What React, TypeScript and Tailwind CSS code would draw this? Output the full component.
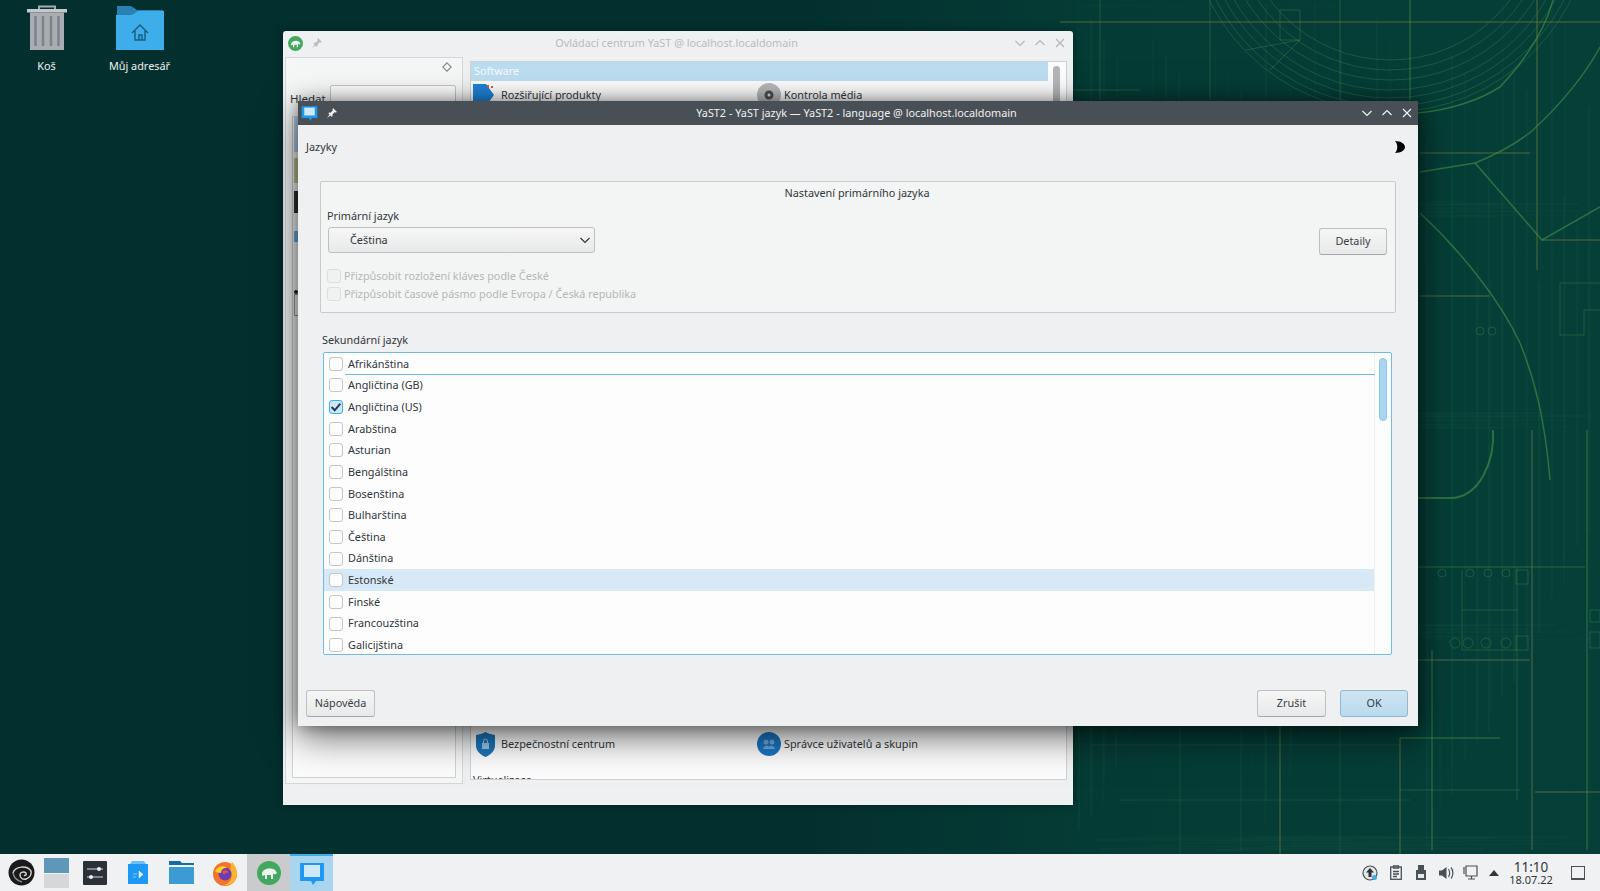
import React from "react";

const languages = ["Afrikánština","Angličtina (GB)","Angličtina (US)","Arabština","Asturian","Bengálština","Bosenština","Bulharština","Čeština","Dánština","Estonské","Finské","Francouzština","Galicijština"];

function Wallpaper() {
  const vs: number[] = [];
  for (let i = 0; i < 70; i++) vs.push(1078 + ((i * 137) % 523));
  const hs: number[] = [];
  for (let i = 0; i < 64; i++) hs.push(6 + ((i * 211) % 845));
  return (
    <svg className="absolute inset-0" width="1600" height="854" fill="none">
      {vs.map((x, i) => <path key={i} d={`M${x} ${(i * 53) % 300}V${520 + ((i * 71) % 334)}`} stroke="#3f8a5a" strokeOpacity={0.06 + (i % 4) * 0.035} />)}
      {hs.map((y, i) => <path key={i} d={`M${1075 + ((i * 97) % 250)} ${y}H${1340 + ((i * 83) % 260)}`} stroke="#3f8a5a" strokeOpacity={0.06 + (i % 3) * 0.04} />)}
      {[150, 160, 170, 180, 188, 196, 202].map((r) => <circle key={r} cx="1390" cy="-90" r={r} stroke="#4c9a50" strokeOpacity="0.3" />)}
      <g stroke="#4d9a48" strokeWidth="1.5" strokeOpacity="0.55">
        <path d="M1420 213C1460 250 1500 300 1520 343C1535 380 1545 420 1550 480" />
        <path d="M1600 47C1585 75 1565 100 1533 130C1515 145 1495 155 1475 163L1420 172" />
        <path d="M1475 163L1542 240L1600 207" />
        <path d="M1553 0C1545 30 1525 60 1500 87C1480 100 1450 110 1418 113" />
        <path d="M1493 430C1495 460 1480 498 1450 498H1418" strokeWidth="2" />
      </g>
      <g stroke="#6a7a3f" strokeWidth="2" strokeOpacity="0.38">
        <path d="M1060 22H1600" />
        <path d="M1420 153H1530" />
        <path d="M1420 296H1490" />
        <path d="M1542 240H1600" />
        <path d="M1537 0V270" />
        <path d="M1535 792H1600" />
        <path d="M1532 430V850" />
        <path d="M1418 660H1530" />
        <path d="M1280 726V854" />
        <path d="M1400 738V854" />
      </g>
      <g stroke="#4d9a48" strokeOpacity="0.32">
        <path d="M1410 0V100" strokeWidth="2" />
        <path d="M1418 567H1585" strokeWidth="1.5" />
        <path d="M1400 738H1500" strokeWidth="2" />
        <path d="M1400 790H1520" />
        <path d="M1587 430V850" strokeWidth="2" />
        <path d="M1432 650V850" strokeWidth="2" />
        <path d="M1517 567V800" />
        <path d="M1560 283H1600M1560 283V335H1584V310H1600" />
        <path d="M1462 610H1518M1462 570V650H1518" />
        <path d="M1280 10H1300V40H1280ZM1246 50L1300 40L1270 70" />
        <path d="M1072 90H1140M1100 0V100M1210 0V100M1340 0V100" />
        <path d="M1090 745H1400M1120 800H1410M1180 726V854M1340 726V854" strokeOpacity="0.2" />
        {[1455, 1468, 1486, 1506].map((x) => <circle key={x} cx={x} cy="643" r="5" />)}
        {[1442, 1470, 1488, 1506].map((x) => <circle key={x} cx={x} cy="573" r="4" />)}
        <circle cx="1480" cy="331" r="4" /><circle cx="1492" cy="331" r="4" />
        <path d="M1516 570H1528V584H1516ZM1516 636H1528V650H1516ZM1590 610H1600V622H1590ZM1590 632H1600V648H1590Z" />
      </g>
    </svg>
  );
}

function Btn({ children, ok, className }: { children: React.ReactNode; ok?: boolean; className: string }) {
  return (
    <div className={`flex h-[27px] items-center justify-center rounded-[3px] border ${ok ? "border-[#8fb9d2] bg-linear-to-b from-[#cfe4f2] to-[#b8daee]" : "border-[#bdbfc0] border-b-[#a5a7a9] bg-linear-to-b from-[#f6f6f6] to-[#e8e9ea]"} text-[10.85px] text-[#3b4045] ${className}`}>
      {children}
    </div>
  );
}

function Check({ checked, disabled }: { checked?: boolean; disabled?: boolean }) {
  return (
    <div className={`flex size-[14px] shrink-0 items-center justify-center rounded-[3px] border ${checked ? "border-[#3daee9] bg-[#cfe6f5]" : disabled ? "border-[#dcdddd] bg-[#f0f1f1]" : "border-[#c3c5c6] bg-[#fdfdfd]"}`}>
      {checked && (
        <svg width="12" height="12" viewBox="0 0 11 11" fill="none"><path d="M1.5 5.5L4.3 8.5L9.5 2.5" stroke="#1f3a4f" strokeWidth="1.8" /></svg>
      )}
    </div>
  );
}

function Pin({ color }: { color: string }) {
  return (
    <svg width="12" height="12" viewBox="0 0 12 12" fill={color}>
      <path d="M7 1L11 5L9.8 5.6L8.6 5.3L6.4 7.6L6.6 9.2L5.6 9.8L2.4 6.6L3 5.6L4.6 5.8L6.8 3.6L6.5 2.2Z" />
      <path d="M3.6 7.6L1 11L4.6 8.6Z" />
    </svg>
  );
}

function WinBtns({ color }: { color: string }) {
  return (
    <div className="flex w-[60px] items-center justify-end gap-[10px]">
      <svg width="10" height="10" viewBox="0 0 10 10" fill="none" stroke={color} strokeWidth="1.2"><path d="M0.5 3L5 7.5L9.5 3" /></svg>
      <svg width="10" height="10" viewBox="0 0 10 10" fill="none" stroke={color} strokeWidth="1.2"><path d="M0.5 7L5 2.5L9.5 7" /></svg>
      <svg width="10" height="10" viewBox="0 0 10 10" fill="none" stroke={color} strokeWidth="1.2"><path d="M1 1L9 9M9 1L1 9" /></svg>
    </div>
  );
}

function Bubble({ w, h }: { w: number; h: number }) {
  return (
    <svg width={w} height={h} viewBox="0 0 26 24">
      <path d="M1 1H25V19H17L14 23L12 19H1Z" fill="#1d99f3" />
      <path d="M5 3H21V15H5Z" fill="#cfe8f8" />
    </svg>
  );
}

function Gecko({ size }: { size: number }) {
  return (
    <svg width={size} height={size} viewBox="0 0 24 24">
      <circle cx="12" cy="12" r="12" fill="#43a85f" />
      <path d="M5 13C5 8 13 6 18 9L20 12L18 13.5L16 12.5V18H14V14H10V18H8V14L5.5 15Z" fill="#f1f5f1" />
    </svg>
  );
}

function BackWindow() {
  return (
    <div className="absolute left-[283px] top-[31px] flex h-[774px] w-[790px] flex-col rounded-t-[3px] bg-[#eff0f1] shadow-[0_0_8px_rgba(0,0,0,0.35)]">
      <div className="relative flex h-[24px] shrink-0 items-center justify-between pl-[5px] pr-[8px]">
        <div className="flex w-[60px] items-center gap-[8px]">
          <Gecko size={15} />
          <Pin color="#b9bbbc" />
        </div>
        <span className="text-[10.85px] text-[#b9bcbd]">Ovládací centrum YaST @ localhost.localdomain</span>
        <WinBtns color="#b4b6b8" />
      </div>
      <div className="flex pl-[2px] pr-[5px] pt-[2px]">
        <div className="flex h-[727px] w-[178px] flex-col border border-[#d5d6d7] bg-[#f5f6f6] pl-[4px] pr-[6px]">
          <div className="flex justify-end pr-[4px] pt-[4px]">
            <svg width="10" height="10" viewBox="0 0 10 10" fill="none" stroke="#8a8d90" strokeWidth="1.2"><path d="M5 .8L9.2 5L5 9.2L.8 5Z" /></svg>
          </div>
          <div className="mt-[13px] flex items-end gap-[4px]">
            <span className="text-[11.5px] leading-[20px] text-[#31363b]">Hledat</span>
            <div className="h-[24px] flex-1 rounded-[2px] border border-[#c3c5c6] bg-[#fcfcfc]" />
          </div>
          <div className="ml-[2px] mt-[7px] flex h-[662px] flex-col items-start border border-[#d0d1d2] bg-[#fbfbfb] pl-[1px]">
            <div className="h-[35px] w-[12px] bg-[#b5d2e8]" />
            <div className="mt-[6px] h-[25px] w-[12px] bg-[#c3c795]" />
            <div className="mt-[8px] h-[22px] w-[12px] bg-[#333333]" />
            <div className="mt-[18px] h-[11px] w-[12px] bg-[#6db4e6]" />
            <div className="mt-[48px] size-[4px] rounded-full bg-[#222222]" />
            <div className="h-[22px] w-[12px] border border-[#999999]" />
          </div>
        </div>
        <div className="ml-[7px] mt-[4px] flex h-[719px] w-[597px] flex-col overflow-hidden border border-[#d0d1d2] bg-[#fcfcfc]">
          <div className="flex h-[19px] shrink-0 pr-[18px]">
            <div className="flex-1 bg-[#bcddf0] pl-[3px] text-[10.85px] leading-[17px] text-[#f4fafd]">Software</div>
          </div>
          <div className="mt-[2px] flex h-[24px] shrink-0 items-center pl-[2px] text-[10.85px] text-[#31363b]">
            <div className="flex w-[284px] items-center gap-[6px]">
              <svg width="22" height="24" viewBox="0 0 22 24"><path d="M0 1H13L21 12L13 23H0Z" fill="#1d82d6" /><path d="M14 2H16V5H14ZM18 3H20V5H18Z" fill="#c2615e" /></svg>
              <span>Rozšiřující produkty</span>
            </div>
            <div className="flex items-center gap-[3px]">
              <svg width="24" height="24" viewBox="0 0 24 24"><circle cx="12" cy="12" r="12" fill="#b6b8ba" /><circle cx="12" cy="12" r="4.5" fill="#4c5053" /><circle cx="12" cy="12" r="1.5" fill="#d9dadb" /></svg>
              <span>Kontrola média</span>
            </div>
          </div>
          <div className="flex-1" />
          <div className="flex h-[26px] shrink-0 items-center pl-[5px] text-[10.85px] text-[#31363b]">
            <div className="flex w-[281px] items-center gap-[6px]">
              <svg width="19" height="25" viewBox="0 0 19 25"><path d="M9.5 0C13 2 16 2.5 19 3V14C19 19 14 23 9.5 25C5 23 0 19 0 14V3C3 2.5 6 2 9.5 0Z" fill="#1b75bc" /><rect x="6" y="11" width="7" height="6" fill="#9cc4e2" /><path d="M7.5 11V9A2 2 0 0 1 11.5 9V11" stroke="#9cc4e2" fill="none" /></svg>
              <span>Bezpečnostní centrum</span>
            </div>
            <div className="flex items-center gap-[3px]">
              <svg width="24" height="26" viewBox="0 0 24 26"><circle cx="12" cy="13" r="12" fill="#1b75c4" /><circle cx="9" cy="11" r="2.5" fill="#6fa8d9" /><circle cx="15" cy="11" r="2.5" fill="#6fa8d9" /><path d="M6 18C7 14 11 14 12 16C13 14 17 14 18 18Z" fill="#6fa8d9" /></svg>
              <span>Správce uživatelů a skupin</span>
            </div>
          </div>
          <div className="mt-[15px] h-[7px] shrink-0 pl-[2px] text-[10.85px] leading-[16px] text-[#31363b]">Virtualizace</div>
          <div className="absolute left-[770px] top-[35px] h-[60px] w-[7px] rounded-[4px] bg-[#b3b5b6]" />
        </div>
      </div>
    </div>
  );
}

function Dialog() {
  return (
    <div className="absolute left-[298px] top-[101px] flex h-[625px] w-[1120px] flex-col bg-[#eff0f1] shadow-[0_10px_34px_rgba(0,0,0,0.6),0_0_14px_rgba(0,0,0,0.35)]">
      <div className="relative flex h-[24px] shrink-0 items-center justify-between bg-[#485056] pl-[3px] pr-[6px]">
        <div className="flex w-[60px] items-center gap-[8px]">
          <Bubble w={17} h={17} />
          <Pin color="#eff0f1" />
        </div>
        <span className="text-[10.85px] text-[#eff0f1]">YaST2 - YaST jazyk — YaST2 - language @ localhost.localdomain</span>
        <WinBtns color="#eff0f1" />
      </div>
      <div className="flex h-[44px] shrink-0 items-center justify-between pl-[8px] pr-[13px] text-[10.85px] text-[#31363b]">
        <span>Jazyky</span>
        <svg width="10" height="12" viewBox="0 0 10 12" fill="#000"><path d="M0 0C6 0 10 3 10 6C10 9 6 12 0 12C3 9 3 3 0 0Z" /></svg>
      </div>
      <div className="mx-[22px] mt-[12px] h-[132px] shrink-0 rounded-[2px] border border-[#c9cacb] bg-[#f3f4f4] pl-[6px] pr-[8px] text-[10.85px] text-[#31363b]">
        <div className="pt-[2px] text-center leading-[17px]">Nastavení primárního jazyka</div>
        <div className="mt-[6px] flex items-start justify-between">
          <div>
            <div className="leading-[17px]">Primární jazyk</div>
            <div className="ml-[1px] mt-[3px] flex h-[26px] w-[267px] items-center justify-between rounded-[3px] border border-[#bdbfc0] bg-linear-to-b from-[#f6f6f6] to-[#e8e9ea] pl-[21px] pr-[4px]">
              <span>Čeština</span>
              <svg width="10" height="10" viewBox="0 0 10 10" fill="none" stroke="#31363b" strokeWidth="1.2"><path d="M0.5 3L5 7.5L9.5 3" /></svg>
            </div>
          </div>
          <Btn className="mt-[21px] w-[68px]">Detaily</Btn>
        </div>
        <div className="mt-[14px] flex h-[14px] items-center gap-[3px] text-[#b5b7b8]"><Check disabled />Přizpůsobit rozložení kláves podle České</div>
        <div className="mt-[4px] flex h-[14px] items-center gap-[3px] text-[#b5b7b8]"><Check disabled />Přizpůsobit časové pásmo podle Evropa / Česká republika</div>
      </div>
      <div className="ml-[24px] mt-[18px] text-[10.85px] leading-[17px] text-[#31363b]">Sekundární jazyk</div>
      <div className="ml-[25px] mt-[4px] flex h-[303px] w-[1069px] shrink-0 overflow-hidden rounded-[2px] border border-[#6fbbe6] bg-[#fdfdfd]">
        <div className="w-[1051px] border-r border-[#eeeff0]">
          {languages.map((l, i) => (
            <div key={l} className={`flex h-[21.65px] items-center gap-[5px] pl-[5px] text-[10.85px] text-[#31363b] ${i === 10 ? "bg-[#d7e9f6]" : ""}`}>
              <Check checked={i === 2} />
              <span>{l}</span>
            </div>
          ))}
        </div>
        <div className="flex-1 pl-[4px] pt-[5px]">
          <div className="h-[63px] w-[8px] rounded-[4px] border border-[#8cc8ea] bg-[#a8d5ef]" />
        </div>
      </div>
      <div className="mt-[35px] flex items-center justify-between pl-[8px] pr-[10px]">
        <Btn className="w-[69px]">Nápověda</Btn>
        <div className="flex gap-[14px]">
          <Btn className="w-[69px]">Zrušit</Btn>
          <Btn ok className="w-[68px]">OK</Btn>
        </div>
      </div>
      <div className="absolute left-[47px] top-[273px] h-px w-[1030px] bg-[#6fbbe6]" />
    </div>
  );
}

function Taskbar() {
  return (
    <div className="flex h-[37px] shrink-0 items-center bg-[#eff1f2] text-[#31363b]">
      <div className="ml-[8px] flex w-[27px] justify-center">
        <svg width="27" height="27" viewBox="0 0 27 27">
          <circle cx="13.5" cy="13.5" r="13" fill="#1a1a1a" />
          <path d="M5 14C7 7 19 6 23 12C24 15 22 19 18 20C15 21 12 19 12 16C12 13 16 12 18 14C19 16 17 17 16 16" stroke="#d8d8d8" strokeWidth="1.4" fill="none" />
          <path d="M5 14C6 19 10 22 14 23" stroke="#888" strokeWidth="1.4" fill="none" />
        </svg>
      </div>
      <div className="ml-[9px] flex h-[30px] w-[25px] flex-col">
        <div className="h-[15px] bg-[#5f97b8]" />
        <div className="mt-[1px] flex-1 bg-[#d5d7d8]" />
      </div>
      <div className="ml-[14px]">
        <svg width="24" height="24" viewBox="0 0 24 24">
          <rect width="24" height="24" rx="1" fill="#2b3136" />
          <path d="M4 8H20M4 16H20" stroke="#9aa0a5" strokeWidth="1.4" />
          <circle cx="16" cy="8" r="2" fill="#eff0f1" /><circle cx="8" cy="16" r="2" fill="#eff0f1" />
        </svg>
      </div>
      <div className="ml-[21px]">
        <svg width="20" height="24" viewBox="0 0 20 24">
          <path d="M0 3H20V23H0Z" fill="#1d99f3" />
          <path d="M2 3L4 0H16L18 3Z" fill="#6cc0f5" />
          <path d="M5 13H9M5 16H8M11 10L15 13.5L11 17Z" fill="#e6f3fc" stroke="#e6f3fc" strokeWidth="0.6" />
        </svg>
      </div>
      <div className="ml-[21px]">
        <svg width="25" height="23" viewBox="0 0 25 23">
          <path d="M0 0H11L13 2H25V23H0Z" fill="#186b9f" />
          <rect y="4" width="25" height="2" fill="#e9f3f8" />
          <path d="M0 6H25V23H0Z" fill="#3c9bd3" />
        </svg>
      </div>
      <div className="ml-[18px]">
        <svg width="26" height="26" viewBox="0 0 26 26">
          <circle cx="13" cy="14" r="12" fill="#f3732a" />
          <path d="M20 2C25 7 26 14 24 19C22 24 16 26 11 25C18 24 21 18 19 13C18 9 18 5 20 2Z" fill="#fcb331" />
          <circle cx="13" cy="14" r="6.5" fill="#6c3bb8" />
          <path d="M3 11C6 6 12 5 15 8C11 8 9 10 9 13C6 13 4 12 3 11Z" fill="#f6d22c" />
          <path d="M10 12C12 9 16 10 17 13C15 12 13 13 12 15Z" fill="#e8523a" />
        </svg>
      </div>
      <div className="ml-[9px] flex h-[37px] w-[43px] items-center justify-center bg-[#c9cbcc]">
        <Gecko size={24} />
      </div>
      <div className="flex h-[37px] w-[43px] items-center justify-center border-t-2 border-[#3daee9] bg-[#a9d5ef]">
        <Bubble w={26} h={24} />
      </div>
      <div className="flex-1" />
      <div className="flex items-center">
        <svg width="16" height="16" viewBox="0 0 16 16">
          <circle cx="8" cy="8" r="7" fill="#e4e5e6" stroke="#4a5055" strokeWidth="1.2" />
          <path d="M8 3L12 7.5H9.5V12H6.5V7.5H4Z" fill="#2b3136" />
          <circle cx="12.5" cy="12.5" r="2.5" fill="#4aa8e0" />
        </svg>
        <svg className="ml-[12px]" width="12" height="15" viewBox="0 0 12 15" fill="none" stroke="#4a5055" strokeWidth="1.3">
          <rect x=".7" y="2" width="10.6" height="12.3" /><path d="M3.5 0.8H8.5V3.2H3.5ZM3 6.5H9M3 9H9M3 11.5H7" />
        </svg>
        <svg className="ml-[14px]" width="10" height="15" viewBox="0 0 10 15">
          <path d="M2 0H8V5H2Z" fill="#4a5055" /><path d="M0 5H10V15H0Z" fill="#4a5055" /><path d="M2 9H8V13H2Z" fill="#e8e9ea" />
        </svg>
        <svg className="ml-[13px]" width="15" height="14" viewBox="0 0 15 14" fill="#4a5055">
          <path d="M0 4.5H3L7.5 1V13L3 9.5H0Z" /><path d="M9.5 3C11 5 11 9 9.5 11M12 1.5C14.5 4.5 14.5 9.5 12 12.5" stroke="#4a5055" fill="none" strokeWidth="1.2" />
        </svg>
        <svg className="ml-[9px]" width="15" height="15" viewBox="0 0 15 15" fill="none" stroke="#4a5055" strokeWidth="1.2">
          <path d="M3 1H14V11H3ZM5 14H12M8.5 11V14" /><path d="M1 2V9" />
        </svg>
        <svg className="ml-[11px]" width="10" height="6" viewBox="0 0 10 6" fill="#31363b"><path d="M5 0L10 6H0Z" /></svg>
        <div className="ml-[5px] flex w-[54px] flex-col items-center">
          <span className="text-[13.5px] leading-[13px]">11:10</span>
          <span className="text-[11px] leading-[11px]">18.07.22</span>
        </div>
        <div className="ml-[13px] mr-[15px] h-[14px] w-[14px] border border-[#4a5055] border-b-2" />
      </div>
    </div>
  );
}

export default function App() {
  return (
    <div className="flex h-[891px] w-[1600px] flex-col overflow-hidden bg-[#03302f] font-['Noto_Sans',sans-serif]">
      <div className="relative flex-1 bg-[linear-gradient(90deg,#03302f_0%,#03302f_50%,#053b35_68%,#053f38_100%)]">
        <Wallpaper />
        <div className="relative flex text-[10.85px] text-[#eff0f1]">
          <div className="flex w-[93px] flex-col items-center pt-[5px]">
            <svg width="42" height="46" viewBox="0 0 42 46">
              <path d="M13 4V1.5H29V4" stroke="#a6abaf" strokeWidth="2" fill="none" />
              <rect x="1" y="4" width="40" height="3.5" fill="#c4c8cb" />
              <path d="M4 7.5H38V45H4Z" fill="#a9adb1" />
              <path d="M9.5 11V41M17 11V41M25 11V41M32.5 11V41" stroke="#7d8286" strokeWidth="2.5" />
            </svg>
            <span className="mt-[6px] leading-[17px]">Koš</span>
          </div>
          <div className="flex w-[93px] flex-col items-center pt-[6px]">
            <svg width="48" height="45" viewBox="0 0 48 45">
              <path d="M1 0H15L21 4H47V12H1Z" fill="#2a80b5" />
              <path d="M0 9H16L22 5H48V44H0Z" fill="#3daee9" />
              <path d="M16 27L24 19L32 27M19 25V34H29V25M23 34V29H26V34" stroke="#1b5f85" strokeWidth="1.5" fill="none" />
            </svg>
            <span className="mt-[6px] leading-[17px]">Můj adresář</span>
          </div>
        </div>
        <BackWindow />
        <Dialog />
      </div>
      <Taskbar />
    </div>
  );
}
